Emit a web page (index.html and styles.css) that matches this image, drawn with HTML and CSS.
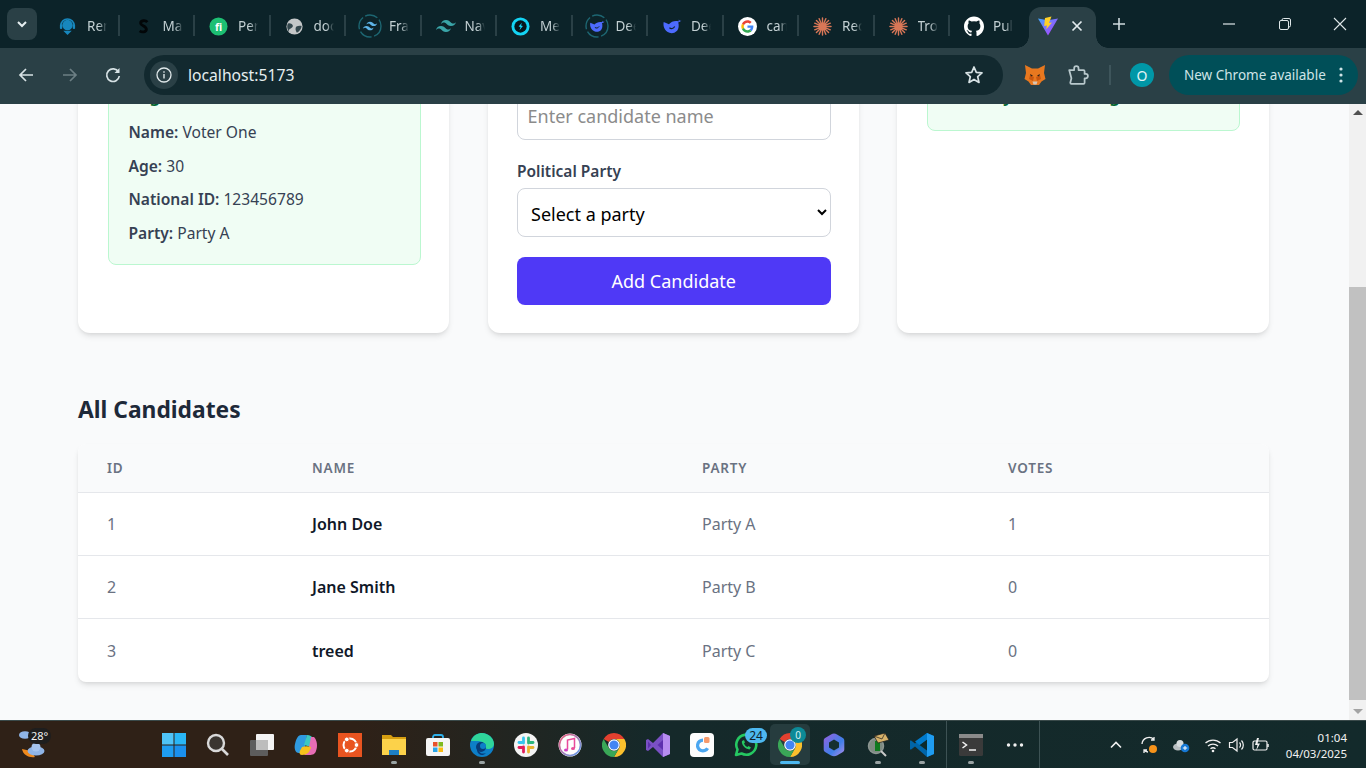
FILE: index.html
```html
<!DOCTYPE html>
<html lang="en">
<head>
<meta charset="utf-8">
<title>Voting App</title>
<link rel="stylesheet" href="styles.css">
</head>
<body>
<div class="screen">
  <header class="tabstrip">
    <button class="tab-menu"><svg class="ic16" viewBox="0 0 16 16"><path d="M4 6l4 4 4-4" fill="none" stroke="#e6eef0" stroke-width="2"/></svg></button>
    <div class="tabs">
      <div class="tab"><svg class="fav" viewBox="0 0 20 20"><circle cx="10" cy="8.500" r="5.500" fill="#1787bd"/><path d="M3 9a7 7 0 0 1 14 0" fill="none" stroke="#1787bd" stroke-width="1.600"/><rect x="2" y="7.500" width="2.500" height="5" rx="1" fill="#1787bd"/><rect x="15.500" y="7.500" width="2.500" height="5" rx="1" fill="#1787bd"/><path d="M5.500 14.500h9L10 19z" fill="#1787bd"/></svg><span class="tab-title">Ren</span></div>
      <div class="tab"><svg class="fav" viewBox="0 0 20 20"><path d="M14 5.500C12 3 7 3.500 7 6.500c0 3 6 2.500 6 6.500 0 3-4.500 3.500-7 1.500" fill="none" stroke="#020608" stroke-width="3"/></svg><span class="tab-title">Ma</span></div>
      <div class="tab"><svg class="fav" viewBox="0 0 20 20"><circle cx="10" cy="10" r="9.500" fill="#1dbf73"/><text x="10" y="14.500" class="fav-fi">fi</text></svg><span class="tab-title">Per</span></div>
      <div class="tab"><svg class="fav" viewBox="0 0 20 20"><circle cx="10" cy="10" r="8.500" fill="#c4c7c8"/><path d="M3 7c2-1 4 0 5 1.500s-.5 3-2 3.500-2.500 2-1.500 4C3 14 1.500 10 3 7zm9 3c2-1 4-1 5.500-.5-.2 3-2 5.500-5 7-1.500-2-2-5-.5-6.500z" fill="#33474d"/></svg><span class="tab-title">doc</span></div>
      <div class="tab"><svg class="fav fav-lg" viewBox="0 0 24 24"><circle cx="12" cy="12" r="11" fill="none" stroke="#1d6672" stroke-width="1.400" stroke-dasharray="13 2.500"/><g transform="translate(3.500 3.500) scale(.71)"><path class="tw-blue" d="M12 6c-2.670 0-4.330 1.330-5 4 1-1.330 2.170-1.830 3.500-1.500.76.19 1.310.74 1.910 1.350.98 1 2.090 2.150 4.590 2.150 2.670 0 4.330-1.330 5-4-1 1.330-2.170 1.830-3.500 1.500-.76-.19-1.310-.74-1.910-1.350C15.610 7.150 14.500 6 12 6zm-5 6c-2.670 0-4.330 1.330-5 4 1-1.330 2.170-1.830 3.500-1.500.76.19 1.310.74 1.910 1.350C8.390 16.850 9.500 18 12 18c2.670 0 4.330-1.330 5-4-1 1.330-2.170 1.830-3.500 1.500-.76-.19-1.310-.74-1.910-1.350C10.610 13.150 9.500 12 7 12z"/></g></svg><span class="tab-title">Fra</span></div>
      <div class="tab"><svg class="fav fav-lg" viewBox="0 0 24 24"><path class="tw-teal" d="M12 6c-2.670 0-4.330 1.330-5 4 1-1.330 2.170-1.830 3.500-1.500.76.19 1.310.74 1.910 1.350.98 1 2.090 2.150 4.590 2.150 2.670 0 4.330-1.330 5-4-1 1.330-2.170 1.830-3.500 1.500-.76-.19-1.310-.74-1.910-1.350C15.610 7.150 14.500 6 12 6zm-5 6c-2.670 0-4.330 1.330-5 4 1-1.330 2.170-1.830 3.500-1.500.76.19 1.310.74 1.910 1.350C8.390 16.850 9.500 18 12 18c2.670 0 4.330-1.330 5-4-1 1.330-2.170 1.830-3.500 1.500-.76-.19-1.310-.74-1.910-1.350C10.610 13.150 9.500 12 7 12z"/></svg><span class="tab-title">Nav</span></div>
      <div class="tab"><svg class="fav" viewBox="0 0 20 20"><circle cx="10" cy="10" r="9.500" fill="#14d4f4"/><circle cx="10" cy="10" r="6.500" fill="#06161c"/><path d="M11.500 6l-1 3 2 .5-3.500 4.500 1-3.500-2-.5z" fill="#14d4f4"/></svg><span class="tab-title">Me</span></div>
      <div class="tab"><svg class="fav fav-lg" viewBox="0 0 24 24"><circle cx="12" cy="12" r="11" fill="none" stroke="#1d6672" stroke-width="1.400" stroke-dasharray="13 2.500"/><g transform="translate(3.500 3.500) scale(.71)"><path class="whale" d="M23 5.500c-.8.700-1.400.7-2 .4-.5-.3-.9-.8-1.300-1.300l-.3 2.100c-3.700-1.300-8.400 0-11 3.300L2.500 7.500C1.500 12 3.500 18 9 19.700c5.500 1.500 10-1.700 10.500-7.200.1-1.800 0-3.300-.5-4.600 1.500-.3 3-1.200 4-2.400z"/><path class="whale-cut" d="M9 14c2 1.500 4.500 1 6-1.500"/></g></svg><span class="tab-title">Dee</span></div>
      <div class="tab"><svg class="fav fav-lg" viewBox="0 0 24 24"><g transform="translate(1.500 1.500) scale(.88)"><path class="whale" d="M23 5.500c-.8.700-1.400.7-2 .4-.5-.3-.9-.8-1.300-1.300l-.3 2.100c-3.700-1.300-8.400 0-11 3.300L2.500 7.500C1.500 12 3.500 18 9 19.700c5.500 1.500 10-1.700 10.500-7.200.1-1.800 0-3.300-.5-4.600 1.500-.3 3-1.200 4-2.400z"/><path class="whale-cut" d="M9 14c2 1.500 4.500 1 6-1.500"/></g></svg><span class="tab-title">Dee</span></div>
      <div class="tab"><svg class="fav" viewBox="0 0 20 20"><circle cx="10" cy="10" r="10" fill="#fff"/><g transform="translate(3.500 3.500) scale(.27)"><path fill="#EA4335" d="M24 9.500c3.540 0 6.710 1.220 9.210 3.600l6.850-6.850C35.900 2.380 30.470 0 24 0 14.620 0 6.510 5.380 2.560 13.220l7.980 6.190C12.430 13.720 17.740 9.500 24 9.500z"/><path fill="#4285F4" d="M46.980 24.550c0-1.570-.15-3.090-.38-4.550H24v9.020h12.940c-.58 2.960-2.260 5.480-4.780 7.180l7.730 6c4.510-4.180 7.090-10.360 7.090-17.650z"/><path fill="#FBBC05" d="M10.530 28.590c-.48-1.450-.76-2.990-.76-4.590s.27-3.140.76-4.590l-7.980-6.190C.92 16.460 0 20.120 0 24c0 3.880.92 7.540 2.560 10.780l7.970-6.190z"/><path fill="#34A853" d="M24 48c6.480 0 11.930-2.130 15.890-5.810l-7.730-6c-2.150 1.450-4.920 2.300-8.160 2.300-6.260 0-11.570-4.220-13.470-9.910l-7.980 6.190C6.510 42.620 14.620 48 24 48z"/></g></svg><span class="tab-title">can</span></div>
      <div class="tab"><svg class="fav" viewBox="0 0 20 20"><path class="burst" d="M10 1v18M1 10h18M3.600 3.600l12.800 12.800M16.400 3.600L3.600 16.400M6.500 1.800l7 16.400M13.500 1.800l-7 16.400M1.800 6.500l16.400 7M18.200 6.500l-16.400 7"/><circle cx="10" cy="10" r="3" fill="#d97757"/></svg><span class="tab-title">Rec</span></div>
      <div class="tab"><svg class="fav" viewBox="0 0 20 20"><path class="burst" d="M10 1v18M1 10h18M3.600 3.600l12.800 12.800M16.400 3.600L3.600 16.400M6.500 1.800l7 16.400M13.500 1.800l-7 16.400M1.800 6.500l16.400 7M18.200 6.500l-16.400 7"/><circle cx="10" cy="10" r="3" fill="#d97757"/></svg><span class="tab-title">Tro</span></div>
      <div class="tab"><svg class="fav fav-git" viewBox="0 0 24 24"><path fill="#fff" d="M12 .5C5.370.5 0 5.870 0 12.500c0 5.300 3.440 9.800 8.210 11.390.6.11.82-.26.82-.58v-2.030c-3.340.73-4.040-1.610-4.040-1.610-.55-1.390-1.340-1.760-1.340-1.760-1.090-.75.08-.73.08-.73 1.210.08 1.840 1.240 1.840 1.240 1.070 1.840 2.810 1.310 3.500 1 .11-.78.42-1.310.76-1.610-2.670-.3-5.470-1.330-5.470-5.930 0-1.310.47-2.380 1.240-3.220-.12-.3-.54-1.520.12-3.180 0 0 1.010-.32 3.300 1.230a11.500 11.500 0 0 1 6 0c2.290-1.550 3.300-1.230 3.300-1.230.66 1.660.24 2.880.12 3.180.77.84 1.230 1.910 1.230 3.220 0 4.610-2.810 5.630-5.480 5.920.43.37.81 1.100.81 2.220v3.290c0 .32.22.7.82.58C20.570 22.300 24 17.800 24 12.500 24 5.870 18.630.5 12 .5z"/></svg><span class="tab-title">Pul</span></div>
      <div class="tab-active">
        <svg class="fav-vite" viewBox="0 0 20 20"><path d="M0 2.500l10 1.800 10-1.800L10 19.500z" fill="url(#vg)"/><path d="M13.500.5L7 2l-.8 8 2.700-.6-.6 3.800L14 6.500l-3 .6z" fill="#ffd028"/><defs><linearGradient id="vg" x1="0" y1="0" x2="1" y2="1"><stop offset="0" stop-color="#41a6ff"/><stop offset="1" stop-color="#bd34fe"/></linearGradient></defs></svg>
        <svg class="ic14" viewBox="0 0 14 14"><path d="M2.500 2.500l9 9M11.500 2.500l-9 9" stroke="#e3ebee" stroke-width="1.700" fill="none"/></svg>
      </div>
      <svg class="tab-new" viewBox="0 0 14 14"><path d="M7 1v12M1 7h12" stroke="#cfdbde" stroke-width="1.600" fill="none"/></svg>
    </div>
    <div class="winctl">
      <svg class="ic14" viewBox="0 0 14 14"><path d="M1 7h12" stroke="#dfe7e9" stroke-width="1.200"/></svg>
      <svg class="ic14" viewBox="0 0 14 14"><rect x="1.500" y="3.500" width="9" height="9" rx="1.500" fill="none" stroke="#dfe7e9"/><path d="M4 3.500V3a1.500 1.500 0 0 1 1.500-1.500h5.500A1.500 1.500 0 0 1 12.500 3v5.500a1.500 1.500 0 0 1-1.500 1.500" fill="none" stroke="#dfe7e9"/></svg>
      <svg class="ic14" viewBox="0 0 14 14"><path d="M1 1l12 12M13 1L1 13" stroke="#dfe7e9" stroke-width="1.100" fill="none"/></svg>
    </div>
  </header>

  <nav class="toolbar">
    <svg class="nav-ic" viewBox="0 0 18 18"><path d="M16 9H3M9 3L3 9l6 6" fill="none" stroke="#d7e2e5" stroke-width="1.700"/></svg>
    <svg class="nav-ic" viewBox="0 0 18 18"><path d="M2 9h13M9 3l6 6-6 6" fill="none" stroke="#6c7f84" stroke-width="1.700"/></svg>
    <svg class="nav-ic" viewBox="0 0 18 18"><path d="M14.500 6A6.300 6.300 0 1 0 15.300 10" fill="none" stroke="#d7e2e5" stroke-width="1.700"/><path d="M15.500 2v5h-5z" fill="#d7e2e5"/></svg>
    <div class="omnibox">
      <span class="site-info"><svg class="ic16" viewBox="0 0 16 16"><circle cx="8" cy="8" r="7" fill="none" stroke="#e0e8ea" stroke-width="1.300"/><path d="M8 7v4.500M8 4.200v1.500" stroke="#e0e8ea" stroke-width="1.400"/></svg></span>
      <span class="url">localhost:5173</span>
      <svg class="star" viewBox="0 0 20 20"><path d="M10 2l2.300 5.400 5.700.5-4.300 3.800 1.300 5.700-5-3-5 3 1.300-5.700L2 7.900l5.700-.5z" fill="none" stroke="#d7e2e5" stroke-width="1.700" stroke-linejoin="round"/></svg>
    </div>
    <svg class="fox" viewBox="0 0 22 22"><path d="M1 1l7 3.500h6L21 1l-1 8 1.500 6-4 2.500-2.500 3.500H7l-2.500-3.500-4-2.500L2 9z" fill="#e8781f"/><path d="M6 11l4 2-1 4-4-2zm10 0l-4 2 1 4 4-2z" fill="#c9570f"/><path d="M8.500 17.500h5l-1 3h-3z" fill="#d8c6b4"/><path d="M6 10l3 1.500-2 1zm10 0l-3 1.500 2 1z" fill="#2c2118"/></svg>
    <svg class="puzzle" viewBox="0 0 20 20"><path d="M2 5.500h4.500V4a2 2 0 0 1 4 0v1.500H15a1 1 0 0 1 1 1V9h1a2 2 0 0 1 0 4h-1v4a1 1 0 0 1-1 1H4a1 1 0 0 1-1-1l1-4-2-7.500z" fill="none" stroke="#b8c8cc" stroke-width="1.600" stroke-linejoin="round"/></svg>
    <span class="tool-sep"></span>
    <span class="avatar">O</span>
    <div class="update-pill"><span>New Chrome available</span><svg class="dots" viewBox="0 0 4 16"><circle cx="2" cy="2" r="1.600"/><circle cx="2" cy="8" r="1.600"/><circle cx="2" cy="14" r="1.600"/></svg></div>
  </nav>

  <div class="main">
    <main class="viewport">
      <section class="cards">
        <article class="card">
          <h3 class="card-title">Your Status</h3>
          <div class="note note-voter">
            <h4 class="note-title">Registered Voter</h4>
            <p class="voter-row"><strong>Name:</strong> Voter One</p>
            <p class="voter-row"><strong>Age:</strong> 30</p>
            <p class="voter-row"><strong>National ID:</strong> 123456789</p>
            <p class="voter-row"><strong>Party:</strong> Party A</p>
          </div>
        </article>
        <article class="card">
          <h3 class="card-title">Add Candidate</h3>
          <form class="form">
            <label class="field-label" for="cname">Candidate Name</label>
            <input class="field" id="cname" placeholder="Enter candidate name">
            <label class="field-label field-gap" for="party">Political Party</label>
            <select class="field select" id="party"><option>Select a party</option></select>
            <button type="button" class="submit">Add Candidate</button>
          </form>
        </article>
        <article class="card">
          <h3 class="card-title">Cast Your Vote</h3>
          <div class="note"><h4 class="note-title">Thank you for voting!</h4></div>
        </article>
      </section>

      <h2 class="section-title">All Candidates</h2>
      <div class="table-card">
        <table class="table">
          <colgroup><col class="c-id"><col class="c-name"><col class="c-party"><col class="c-votes"></colgroup>
          <thead><tr><th>ID</th><th>Name</th><th>Party</th><th>Votes</th></tr></thead>
          <tbody>
            <tr><td>1</td><td class="name">John Doe</td><td>Party A</td><td>1</td></tr>
            <tr><td>2</td><td class="name">Jane Smith</td><td>Party B</td><td>0</td></tr>
            <tr><td>3</td><td class="name">treed</td><td>Party C</td><td>0</td></tr>
          </tbody>
        </table>
      </div>
    </main>
    <aside class="scrollbar">
      <div class="sb-btn"><span class="arrow-up"></span></div>
      <div class="sb-space"></div>
      <div class="sb-thumb"></div>
      <div class="sb-btn"><span class="arrow-down"></span></div>
    </aside>
  </div>

  <footer class="taskbar">
    <div class="weather">
      <svg class="weather-ic" viewBox="0 0 26 30"><path d="M3 20c1 6 7 9 13 8l-4-6z" fill="#f08a1d"/><ellipse cx="17" cy="22" rx="8.500" ry="4.500" fill="#8fb4e6"/><circle cx="17" cy="18" r="4.500" fill="#a5c4ee"/><ellipse cx="6" cy="6" rx="6" ry="3.800" fill="#8fb4e6"/></svg>
      <span class="temp">28°</span>
    </div>
    <div class="tb-icons">
      <div class="tb"><svg class="tb-ic" viewBox="0 0 24 24"><path fill="#4fc3f7" d="M0 0h11.500v11.500H0z"/><path fill="#29b6f6" d="M12.500 0H24v11.500H12.500z"/><path fill="#1e9df1" d="M0 12.500h11.500V24H0z"/><path fill="#1a90ee" d="M12.500 12.500H24V24H12.500z"/></svg></div>
      <div class="tb"><svg class="tb-ic" viewBox="0 0 24 24"><circle cx="10" cy="10" r="8" fill="#3a3530" stroke="#d9d9d9" stroke-width="2.400"/><path d="M16 16l6 6" stroke="#d9d9d9" stroke-width="2.600"/></svg></div>
      <div class="tb"><svg class="tb-ic" viewBox="0 0 24 24"><rect x="0" y="7" width="18" height="16" rx="1" fill="#5d5d5d"/><rect x="6" y="1" width="18" height="16" rx="1" fill="#f4f4f4"/><rect x="6" y="7" width="12" height="10" fill="#bdbdbd"/></svg></div>
      <div class="tb"><svg class="tb-ic" viewBox="0 0 24 24"><path d="M7 2h6l-3 18H5C1 20 0 15 1 11c1-5 3-9 6-9z" fill="#2f9ae0"/><path d="M10 12l3-10c3 0 5 1 6 4l-2 8z" fill="#3cc8c0"/><path d="M17 4h3c3 3 4 9 2 14-1 3-3 4-7 4H9c4-1 5-4 6-8z" fill="#e86db5"/><path d="M8 14c3-1 6-1 9 0-1 5-4 8-9 8-3 0-3-3-1-6z" fill="#f6c21c"/></svg></div>
      <div class="tb"><svg class="tb-ic" viewBox="0 0 24 24"><rect width="24" height="24" fill="#e95420"/><circle cx="12" cy="12" r="6.500" fill="none" stroke="#fff" stroke-width="2"/><circle cx="18.500" cy="12" r="2.400" fill="#fff" stroke="#e95420"/><circle cx="8.800" cy="6.400" r="2.400" fill="#fff" stroke="#e95420"/><circle cx="8.800" cy="17.600" r="2.400" fill="#fff" stroke="#e95420"/></svg></div>
      <div class="tb"><svg class="tb-ic" viewBox="0 0 24 24"><path d="M0 2h9l2 2h13v5H0z" fill="#d69e11"/><path d="M0 6h24v16H0z" fill="#fcd24a"/><path d="M7 17h10v5H7z" fill="#1d7fc5"/></svg><i class="tb-dot"></i></div>
      <div class="tb"><svg class="tb-ic" viewBox="0 0 24 24"><path d="M7 6V4a2 2 0 0 1 2-2h6a2 2 0 0 1 2 2v2" fill="none" stroke="#2eb0ea" stroke-width="1.800"/><rect y="5" width="24" height="18" rx="2" fill="#f5f5f5"/><path fill="#e8522a" d="M7 9h4.500v4.500H7z"/><path fill="#7fba1f" d="M12.500 9H17v4.500h-4.500z"/><path fill="#2aa5e8" d="M7 14.500h4.500V19H7z"/><path fill="#fbbb12" d="M12.500 14.500H17V19h-4.500z"/></svg></div>
      <div class="tb"><svg class="tb-ic" viewBox="0 0 24 24"><circle cx="12" cy="12" r="12" fill="#0d7fc8"/><path d="M1 8C3 2 8 0 12 0c6 0 12 5 12 11 0 3-3 5-6 5-2 0-4-1-4-3 1-2 0-4-3-4.500C7 8 1 8 1 8z" fill="#2fd59a"/><path d="M8 14a5 5 0 0 0 8 6c-6 2-8-2-8-6z" fill="#073c7a"/><circle cx="11" cy="14" r="5" fill="#073c7a"/><circle cx="13" cy="13" r="3" fill="#0d7fc8"/></svg><i class="tb-dot"></i></div>
      <div class="tb"><svg class="tb-ic" viewBox="0 0 24 24"><circle cx="12" cy="12" r="12" fill="#f4f4f4"/><path d="M9.500 5v5" stroke="#36c5f0" stroke-width="2.800" stroke-linecap="round"/><path d="M5 9.500h3" stroke="#36c5f0" stroke-width="2.800" stroke-linecap="round"/><path d="M14.500 5v5" stroke="#2eb67d" stroke-width="2.800" stroke-linecap="round"/><path d="M16 9.500h3" stroke="#2eb67d" stroke-width="2.800" stroke-linecap="round"/><path d="M14.500 14v5" stroke="#ecb22e" stroke-width="2.800" stroke-linecap="round"/><path d="M16 14.500h3" stroke="#ecb22e" stroke-width="2.800" stroke-linecap="round"/><path d="M9.500 14v5" stroke="#e01e5a" stroke-width="2.800" stroke-linecap="round"/><path d="M5 14.500h3" stroke="#e01e5a" stroke-width="2.800" stroke-linecap="round"/></svg></div>
      <div class="tb"><svg class="tb-ic" viewBox="0 0 24 24"><circle cx="12" cy="12" r="11.500" fill="#fdfdfd"/><circle cx="12" cy="12" r="10.500" fill="none" stroke="url(#it)" stroke-width="1.600"/><path d="M9.500 16.500V7l7-1.500V15" fill="none" stroke="#e84a9a" stroke-width="1.500"/><ellipse cx="8" cy="17" rx="2" ry="1.600" fill="#d13ec2"/><ellipse cx="15" cy="15.500" rx="2" ry="1.600" fill="#e84a9a"/><defs><linearGradient id="it" x1="0" y1="0" x2="1" y2="1"><stop offset="0" stop-color="#f35d7a"/><stop offset="1" stop-color="#5aa0f2"/></linearGradient></defs></svg></div>
      <div class="tb"><svg class="tb-ic" viewBox="0 0 24 24"><path fill="#e3402f" d="M12 0a12 12 0 0 1 10.400 6H12a6 6 0 0 0-5.200 3L1.600 6A12 12 0 0 1 12 0z"/><path fill="#fbc02d" d="M22.400 6A12 12 0 0 1 12 24l5.200-9A6 6 0 0 0 17.200 9a6 6 0 0 0-5.200-3z"/><path fill="#3aa757" d="M1.600 6l5.200 9a6 6 0 0 0 5.200 3 6 6 0 0 0 5.200-3L12 24A12 12 0 0 1 1.600 6z"/><circle cx="12" cy="12" r="5.800" fill="#fff"/><circle cx="12" cy="12" r="4.600" fill="#4285f4"/></svg></div>
      <div class="tb"><svg class="tb-ic" viewBox="0 0 24 24"><path fill="#7a50c4" d="M17 0l7 3v18l-7 3-10-10-5 4-2-1V7l2-1 5 4z"/><path fill="#b78cf0" d="M17 0l7 3v18l-7 3z"/><path fill="#5d2fae" d="M2 8.500L5 12l-3 3.500z"/><path fill="#5d2fae" d="M17 7l-5.500 5 5.500 5z"/></svg></div>
      <div class="tb"><svg class="tb-ic" viewBox="0 0 24 24"><rect width="24" height="24" rx="4" fill="#fdfdfd"/><path d="M13 5.500a7 7 0 1 0 6 10.500l-2.800-1.500A3.800 3.800 0 1 1 13 8.700z" fill="#4aa6f0"/><rect x="14" y="4" width="5.500" height="6" rx="1.500" fill="#f59a6c"/></svg></div>
      <div class="tb"><svg class="tb-ic" viewBox="0 0 24 24"><path d="M2 22l1.500-5.500A10 10 0 1 1 7.500 20.500z" fill="none" stroke="#25c862" stroke-width="2.600" stroke-linejoin="round"/><path d="M8 8c-1 3 3 8 7.500 8.500l1.500-2-2.500-1.500-1 1c-1.500-.5-3-2-3.500-3.500l1-1L10 7z" fill="#25c862"/></svg><span class="tb-badge">24</span></div>
      <div class="tb tb-active"><svg class="tb-ic" viewBox="0 0 24 24"><path fill="#e3402f" d="M12 0a12 12 0 0 1 10.400 6H12a6 6 0 0 0-5.200 3L1.600 6A12 12 0 0 1 12 0z"/><path fill="#fbc02d" d="M22.400 6A12 12 0 0 1 12 24l5.200-9A6 6 0 0 0 17.200 9a6 6 0 0 0-5.200-3z"/><path fill="#3aa757" d="M1.600 6l5.200 9a6 6 0 0 0 5.200 3 6 6 0 0 0 5.200-3L12 24A12 12 0 0 1 1.600 6z"/><circle cx="12" cy="12" r="5.800" fill="#fff"/><circle cx="12" cy="12" r="4.600" fill="#4285f4"/></svg><span class="tb-badge tb-badge-teal">0</span><i class="tb-bar"></i></div>
      <div class="tb"><svg class="tb-ic" viewBox="0 0 24 24"><path d="M12 .5c1 0 2 .4 3 1l5.500 3.200c1.200.7 1.800 1.800 1.800 3v8.600c0 1.200-.6 2.300-1.800 3L15 22.500c-2 1.100-4 1.100-6 0l-5.500-3.200c-1.200-.7-1.800-1.800-1.800-3V7.700c0-1.200.6-2.300 1.800-3L9 1.500c1-.6 2-1 3-1z" fill="url(#m3)"/><path d="M12 6.500l5 2.900v5.200l-5 2.900-5-2.900V9.400z" fill="#16302f"/><defs><linearGradient id="m3" x1="0" y1="0" x2="1" y2="1"><stop offset="0" stop-color="#9a5fe0"/><stop offset=".6" stop-color="#3f7fe8"/><stop offset="1" stop-color="#b48ce8"/></linearGradient></defs></svg></div>
      <div class="tb"><svg class="tb-ic" viewBox="0 0 24 24"><circle cx="10" cy="13" r="7.500" fill="#7c8a80" stroke="#8d9692" stroke-width="1.500"/><path d="M9 8h5v10H9z" fill="#0f7a1e"/><path d="M15 18l5 5" stroke="#c9c9c9" stroke-width="2"/><path d="M8 3l11-3 4 7-11 3z" fill="#d6b26a" stroke="#1c1c1c" stroke-width=".7"/><path d="M8 3l8 3 3-6" fill="none" stroke="#1c1c1c" stroke-width=".7"/></svg><i class="tb-dot"></i></div>
      <div class="tb"><svg class="tb-ic" viewBox="0 0 24 24"><path fill="#0065a9" d="M17 0l7 3v18l-7 3L5 13.500.8 16.800 0 16V8l.8-.8L5 10.500z"/><path fill="#1f9cf0" d="M17 0l7 3v18l-7 3z"/><path fill="#0c2a2c" d="M17 6.500L9.500 12l7.500 5.500z"/><path fill="#007acc" d="M17 0v6.500L9.500 12 5 8.500z"/></svg><i class="tb-dot"></i></div>
    </div>
    <span class="tb-sep"></span>
    <div class="tb tb-term"><svg class="tb-ic" viewBox="0 0 24 24"><rect y="1" width="24" height="22" rx="1.500" fill="#3a3a3a"/><rect y="1" width="24" height="4" fill="#8a8a8a"/><path d="M3.500 9l4 3-4 3" fill="none" stroke="#f2f2f2" stroke-width="1.500"/><path d="M10 17h7" stroke="#f2f2f2" stroke-width="1.500"/></svg><i class="tb-dot"></i></div>
    <div class="tb"><svg class="tb-more" viewBox="0 0 18 6"><circle cx="2.500" cy="3" r="1.700"/><circle cx="9" cy="3" r="1.700"/><circle cx="15.500" cy="3" r="1.700"/></svg></div>
    <span class="tb-sep tb-sep-2"></span>
    <div class="tray">
      <svg class="tray-ic chev" viewBox="0 0 14 14"><path d="M2 9.500L7 4.500l5 5" fill="none" stroke="#f0f0f0" stroke-width="1.600"/></svg>
      <svg class="tray-ic" viewBox="0 0 18 18"><path d="M2 8a7 7 0 0 1 12-4.500M14 1v3h-3M4 17v-3h3M4 14a6 6 0 0 0 4 2" fill="none" stroke="#f0f0f0" stroke-width="1.300"/><circle cx="13" cy="13" r="4" fill="#f7931a"/></svg>
      <svg class="tray-ic" viewBox="0 0 18 18"><ellipse cx="6" cy="11" rx="5" ry="3.500" fill="#b9bfc2"/><circle cx="8" cy="7.500" r="3.500" fill="#d7dcde"/><circle cx="13" cy="12" r="4.300" fill="#1678d4"/><path d="M10.800 12h4.400M13 10v4" stroke="#fff" stroke-width="1"/></svg>
      <svg class="tray-ic" viewBox="0 0 18 18"><path d="M1.500 7a11 11 0 0 1 15 0M4 10a7.500 7.500 0 0 1 10 0M6.500 12.800a3.800 3.800 0 0 1 5 0" fill="none" stroke="#f0f0f0" stroke-width="1.300"/><circle cx="9" cy="15" r="1.300" fill="#f0f0f0"/></svg>
      <svg class="tray-ic" viewBox="0 0 18 18"><path d="M1.500 6.500h3L9 3v12l-4.500-3.500h-3z" fill="none" stroke="#f0f0f0" stroke-width="1.200"/><path d="M11.500 6.500a3.500 3.500 0 0 1 0 5M13.500 4.500a6.500 6.500 0 0 1 0 9" fill="none" stroke="#f0f0f0" stroke-width="1.200"/></svg>
      <svg class="tray-ic" viewBox="0 0 18 18"><rect x="1" y="5" width="14" height="9" rx="1.500" fill="none" stroke="#f0f0f0" stroke-width="1.200"/><path d="M16 8v3" stroke="#f0f0f0" stroke-width="1.500"/><path d="M5 2L3 9h2.500L4 15l4-7.500H5.500L7 2z" fill="#f0f0f0"/></svg>
    </div>
    <div class="clock"><span>01:04</span><span>04/03/2025</span></div>
  </footer>
</div>
</body>
</html>
```
FILE: styles.css
```css
* { box-sizing: border-box; }
html, body { margin: 0; padding: 0; height: 100%; overflow: hidden; }
body { font-family: "Noto Sans", "Open Sans", "Liberation Sans", sans-serif; background: #f9fafb; color: #364153; }
svg { display: block; flex: none; }
.screen { width: 1366px; height: 768px; display: flex; flex-direction: column; overflow: hidden; }

/* tab strip */
.tabstrip { height: 48px; flex: none; background: #0c2329; display: flex; position: relative; }
.tab-menu { width: 30px; height: 32px; margin: 8px 0 0 7px; border: 0; border-radius: 8px; background: #2a4046; display: flex; align-items: center; justify-content: center; padding: 0; }
.ic16 { width: 16px; height: 16px; }
.ic14 { width: 14px; height: 14px; }
.tabs { display: flex; margin-left: 7px; height: 48px; }
.tab { width: 75.500px; height: 40px; margin-top: 6px; display: flex; align-items: center; padding-left: 14px; position: relative; }
.tab::after { content: ""; position: absolute; right: 0; top: 9px; width: 2px; height: 21px; background: #2a4046; }
.tab:nth-child(13)::after { display: none; }
.fav { width: 19px; height: 19px; }
.fav-lg { width: 24px; height: 24px; margin-left: -2px; margin-right: -3px; }
.fav-git { width: 20px; height: 20px; margin-right: -1px; }
.fav-fi { font: 700 11px "Noto Sans", sans-serif; fill: #fff; text-anchor: middle; }
.tw-blue { fill: #5db4e8; }
.tw-teal { fill: #3aa5a8; }
.whale { fill: #4d6bfe; }
.whale-cut { fill: none; stroke: #0c2329; stroke-width: 1.400; }
.burst { stroke: #d97757; stroke-width: 1.500; fill: none; stroke-linecap: round; }
.tab-title { width: 20px; margin-left: 10px; margin-top: -1px; font-size: 13.500px; color: #c3d0d3; white-space: nowrap; overflow: hidden; -webkit-mask-image: linear-gradient(90deg, #000 60%, transparent); mask-image: linear-gradient(90deg, #000 60%, transparent); }
.tab-active { width: 67px; height: 41px; margin-top: 7px; margin-left: 3px; background: #2a4046; border-radius: 12px 12px 0 0; display: flex; align-items: center; padding: 0 0 4px 9px; gap: 12px; position: relative; }
.tab-active::before, .tab-active::after { content: ""; position: absolute; bottom: 0; width: 12px; height: 12px; }
.tab-active::before { left: -12px; background: radial-gradient(circle at 0 0, #0c2329 11.500px, #2a4046 12px); }
.tab-active::after { right: -12px; background: radial-gradient(circle at 100% 0, #0c2329 11.500px, #2a4046 12px); }
.fav-vite { width: 20px; height: 20px; }
.tab-new { width: 14px; height: 14px; margin: 17px 0 0 16px; }
.winctl { position: absolute; top: 17px; left: 1222px; width: 125px; display: flex; justify-content: space-between; }

/* toolbar */
.toolbar { height: 56px; flex: none; background: #2a4046; display: flex; align-items: center; padding: 0 0 2px 17px; }
.nav-ic { width: 18px; height: 18px; margin-right: 26px; }
.nav-ic:nth-child(2) { margin-right: 25px; }
.nav-ic:nth-child(3) { margin-right: 22px; }
.omnibox { width: 859px; height: 40px; border-radius: 20px; background: #12292f; display: flex; align-items: center; padding-left: 6px; }
.site-info { width: 28px; height: 28px; border-radius: 50%; background: #2a4046; display: flex; align-items: center; justify-content: center; }
.url { margin-left: 10px; font-size: 15.700px; color: #e6eef0; flex: 1; }
.star { width: 20px; height: 20px; margin-right: 19px; }
.fox { width: 22px; height: 22px; margin-left: 21px; }
.puzzle { width: 22px; height: 22px; margin-left: 21px; }
.tool-sep { width: 2px; height: 20px; background: #3e555b; margin-left: 20px; }
.avatar { width: 24px; height: 24px; margin-left: 19px; border-radius: 50%; background: #0097a7; color: #e3f4f6; font-size: 14px; display: flex; align-items: center; justify-content: center; }
.update-pill { width: 189px; height: 40px; margin-left: 15px; border-radius: 20px; background: #004f58; display: flex; align-items: center; padding-left: 15px; color: #cfe4e7; font-size: 13.500px; white-space: nowrap; }
.dots { width: 4px; height: 16px; margin-left: 13px; fill: #cfe4e7; }

/* page */
.main { flex: 1; min-height: 0; display: flex; }
.viewport { flex: 1; min-width: 0; overflow: hidden; padding: 0 80px 0 78px; }
.cards { display: grid; grid-template-columns: 371px 371px 372px; gap: 38.500px; margin-top: -118px; }
.card { background: #fff; border-radius: 12px; padding: 29px 28px 28px 29.500px; box-shadow: 0 4px 6px -1px rgba(0,0,0,.1), 0 2px 4px -2px rgba(0,0,0,.1); }
.card:last-child { padding-right: 29px; }
.card-title { margin: 0 0 15px; font-size: 22px; line-height: 32px; font-weight: 700; color: #1e2939; }
.note { background: #f0fdf4; border: 1px solid #bbf7d0; border-radius: 8px; padding: 20px; }
.note-voter { padding-bottom: 19.200px; }
.note-title { margin: 2px 0 3px; font-size: 17px; line-height: 22px; font-weight: 600; color: #016630; }
.note-voter .note-title { margin-bottom: 13px; }
.voter-row { margin: 9.600px 0 0; font-size: 15.600px; line-height: 24px; color: #364153; }
.note-title + .voter-row { margin-top: 0; }
.voter-row strong { font-weight: 600; }
.form { display: flex; flex-direction: column; }
.field-label { font-size: 15.500px; line-height: 24px; font-weight: 600; color: #364153; margin-bottom: 5px; }
.field-gap { margin-top: 19px; }
.field { height: 49px; border: 1px solid #d1d5dc; border-radius: 8px; background: #fff; font: 18px "Noto Sans", sans-serif; padding: 0 9.500px; color: #000; width: 100%; }
.field::placeholder { color: #8b8b8b; opacity: 1; }
.select { padding: 2px 9px 0; }
.submit { margin-top: 20px; height: 48px; border: 0; border-radius: 8px; background: #4f39f6; color: #fff; font: 18px "Noto Sans", sans-serif; padding: 0; }
.section-title { margin: 61px 0 18px; font-size: 22.800px; line-height: 32px; font-weight: 700; color: #1e2939; }
.table-card { background: #fff; border-radius: 8px; overflow: hidden; box-shadow: 0 4px 6px -1px rgba(0,0,0,.1), 0 2px 4px -2px rgba(0,0,0,.1); }
.table { width: 100%; border-collapse: collapse; table-layout: fixed; }
.c-id { width: 205px; }
.c-name { width: 390px; }
.c-party { width: 306px; }
.table th { height: 48px; padding: 0 0 0 29px; text-align: left; background: #f9fafb; font-size: 13.500px; font-weight: 600; letter-spacing: .8px; text-transform: uppercase; color: #6a7282; border-bottom: 1px solid #e5e7eb; }
.table td { height: 63px; padding: 0 0 0 29px; font-size: 16px; color: #6a7282; border-bottom: 1px solid #e5e7eb; }
.table tr:last-child td { height: 64px; padding-top: 1px; border-bottom: 0; }
.table td.name { font-weight: 600; color: #101828; }

/* scrollbar */
.scrollbar { width: 17px; flex: none; background: #f1f1f1; display: flex; flex-direction: column; }
.sb-btn { height: 17px; flex: none; display: flex; align-items: center; justify-content: center; }
.sb-space { height: 166px; flex: none; }
.sb-thumb { flex: 1; background: #c1c1c1; margin-bottom: 3px; }
.arrow-up { width: 0; height: 0; border: 5px solid transparent; border-top: 0; border-bottom: 5px solid #505050; }
.arrow-down { width: 0; height: 0; border: 5px solid transparent; border-bottom: 0; border-top: 5px solid #a3a3a3; }

/* taskbar */
.taskbar { height: 48px; flex: none; display: flex; align-items: center; position: relative; border-top: 1px solid #3a4a4a; background: linear-gradient(90deg, #2f2117 0, #2f2117 26%, #15292a 48%, #132a2b 100%); color: #f2f2f2; }
.weather { width: 152px; padding-left: 19px; position: relative; align-self: stretch; }
.weather-ic { width: 26px; height: 30px; margin-top: 8px; }
.temp { position: absolute; left: 28px; top: 7px; padding: 0 3px; border-radius: 9px; background: #1e1e1e; font-size: 11px; line-height: 16px; }
.tb-icons { display: flex; }
.tb { width: 44px; height: 47px; display: flex; align-items: center; justify-content: center; position: relative; flex: none; }
.tb-ic { width: 24px; height: 24px; }
.tb-dot { position: absolute; left: 19px; bottom: 4px; width: 6px; height: 3px; border-radius: 2px; background: #9aa3a3; }
.tb-badge { position: absolute; left: 21px; top: 7px; height: 15px; min-width: 22px; padding: 0 3px; border-radius: 8px; background: #4db8f0; color: #10202a; font-size: 12px; line-height: 15px; text-align: center; }
.tb-badge-teal { left: 22px; top: 6px; min-width: 16px; height: 16px; background: #0d8a97; color: #d5f0f3; font-size: 10px; line-height: 16px; }
.tb-active::before { content: ""; position: absolute; left: 2px; right: 2px; top: 3px; bottom: 3px; background: #263c3e; border-radius: 5px; }
.tb-active .tb-ic, .tb-active .tb-badge { z-index: 1; }
.tb-bar { position: absolute; left: 12px; bottom: 4px; width: 20px; height: 3px; background: #4db8f0; border-radius: 2px; }
.tb-sep { width: 1px; height: 47px; background: #3d5254; margin-left: 2px; }
.tb-sep-2 { margin-left: 2px; }
.tb-term { margin-left: 2px; }
.tb-more { width: 18px; height: 6px; fill: #f0f0f0; }
.tray { display: flex; align-items: center; margin-left: 69px; }
.tray-ic { width: 18px; height: 18px; margin-right: 14px; }
.tray-ic:nth-child(4), .tray-ic:nth-child(5) { margin-right: 6px; }
.chev { width: 14px; height: 14px; margin-right: 17px; }
.clock { position: absolute; right: 19px; top: 9px; display: flex; flex-direction: column; align-items: flex-end; font-size: 11.500px; line-height: 16px; }
```
